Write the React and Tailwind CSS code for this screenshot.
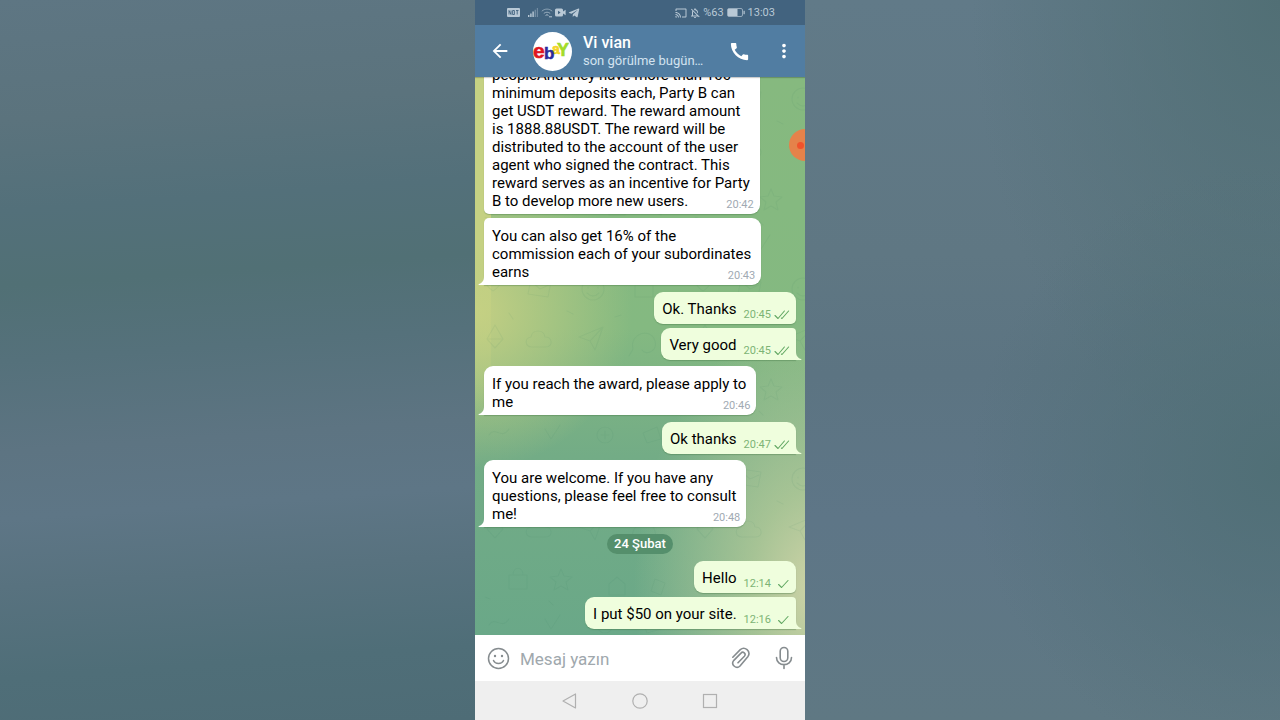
import React from "react";
import { MdArrowBack, MdCall, MdMoreVert, MdCast, MdOutlineNotificationsOff } from "react-icons/md";
import { FaTelegramPlane } from "react-icons/fa";

const messages = [
  {
    time: "20:42",
    last: false,
    lines: [
      "peopleAnd they have more than 100",
      "minimum deposits each, Party B can",
      "get USDT reward. The reward amount",
      "is 1888.88USDT. The reward will be",
      "distributed to the account of the user",
      "agent who signed the contract. This",
      "reward serves as an incentive for Party",
      "B to develop more new users.",
    ],
  },
  {
    time: "20:43",
    last: true,
    joined: true,
    lines: ["You can also get 16% of the", "commission each of your subordinates", "earns"],
  },
  { out: true, time: "20:45", read: true, last: false, lines: ["Ok. Thanks"] },
  { out: true, time: "20:45", read: true, last: true, joined: true, lines: ["Very good"] },
  { time: "20:46", last: true, lines: ["If you reach the award, please apply to", "me"] },
  { out: true, time: "20:47", read: true, last: true, lines: ["Ok thanks"] },
  {
    time: "20:48",
    last: true,
    lines: ["You are welcome. If you have any", "questions, please feel free to consult", "me!"],
  },
  { date: "24 Şubat" },
  { out: true, time: "12:14", last: false, lines: ["Hello"] },
  { out: true, time: "12:16", last: true, joined: true, lines: ["I put $50 on your site."] },
];

function StatusBar() {
  return (
    <div className="flex h-[25px] shrink-0 items-center justify-between bg-[#42637f] pr-[30px] pl-8 text-[#b9c9d6]">
      <div className="flex items-center gap-[2px]">
        <svg width="13" height="9" viewBox="0 0 13 9" className="mr-[6px]" aria-hidden="true">
          <rect width="13" height="9" rx="1" fill="currentColor" />
          <path d="M2 2.5v4M2 2.5l2 4v-4M5.6 2.5h1.8v4H5.6zM9 2.5h2.5M10.2 2.5v4" stroke="#42637f" strokeWidth="0.9" fill="none" />
        </svg>
        <svg width="10" height="9" viewBox="0 0 10 9" fill="currentColor" aria-hidden="true">
          <path d="M0 7h1.4v2H0zM2.2 5.4h1.4V9H2.2zM4.4 3.6h1.4V9H4.4z" />
          <path d="M6.6 1.8H8V9H6.6zM8.8 0H10v9H8.8z" opacity="0.4" />
        </svg>
        <svg width="13" height="10" viewBox="0 0 13 10" fill="none" stroke="currentColor" strokeWidth="1" aria-hidden="true">
          <path d="M1.800 3.200C4.800.4 9.200.4 12.200 3.200" opacity="0.6" />
          <path d="M3.800 5.400c2-1.600 4.400-1.600 6.400 0" opacity="0.7" />
          <path d="M5.600 7.400c.9-.7 1.900-.7 2.800 0" />
          <path d="M9 8.800h3" />
        </svg>
        <svg width="11" height="9" viewBox="0 0 11 9" aria-hidden="true">
          <rect y="0.5" width="8" height="8" rx="1.5" fill="currentColor" />
          <path d="M8 3.600 10.600 1.800v5.400L8 5.400z" fill="currentColor" />
          <path d="M3 2.800v3.400L5.600 4.500z" fill="#42637f" />
        </svg>
        <FaTelegramPlane size={12} aria-hidden="true" />
      </div>
      <div className="flex items-center gap-[2px] text-[11px] leading-none">
        <MdCast size={12} aria-hidden="true" />
        <MdOutlineNotificationsOff size={12} aria-hidden="true" />
        <span>%63</span>
        <svg width="18" height="9" viewBox="0 0 18 9" className="mx-px" aria-hidden="true">
          <rect x="0.5" y="0.5" width="15" height="8" rx="1.5" fill="none" stroke="currentColor" strokeOpacity="0.7" />
          <rect x="1" y="1" width="9.5" height="7" fill="currentColor" />
          <rect x="16.500" y="2.800" width="1.200" height="3.400" fill="currentColor" />
        </svg>
        <span>13:03</span>
      </div>
    </div>
  );
}

function Avatar() {
  return (
    <svg
      width="39"
      height="39"
      viewBox="0 0 39 39"
      className="ml-[22px] shrink-0"
      fontFamily="Liberation Sans, sans-serif"
      fontWeight="700"
      role="img"
      aria-label="ebay"
    >
      <circle cx="19.5" cy="19.5" r="19.5" fill="#fff" />
      <text x="0" y="26" fontSize="21" fill="#e0151f" stroke="#e0151f" strokeWidth="0.6">e</text>
      <text x="19" y="22" fontSize="14" fill="#f5d327" stroke="#f5d327" strokeWidth="0.6">a</text>
      <text x="11" y="27" fontSize="17" fill="#2b2a9c" stroke="#2b2a9c" strokeWidth="0.5">b</text>
      <text x="24" y="24" fontSize="18" fill="#a3dc2b" stroke="#a3dc2b" strokeWidth="0.6">Y</text>
    </svg>
  );
}

function Header() {
  return (
    <header className="relative z-10 flex h-[52px] shrink-0 items-center bg-[#517da2] pr-[10px] pl-[14px] text-white shadow-[0_1px_1px_rgba(0,0,0,0.2)]">
      <button type="button" aria-label="Geri" className="shrink-0">
        <MdArrowBack size={22} />
      </button>
      <Avatar />
      <div className="ml-[11px] min-w-0 flex-1">
        <h1 className="text-base leading-[19px] font-medium">Vi vian</h1>
        <p className="text-[13px] leading-[18px] text-[#d3e3f0]">son görülme bugün…</p>
      </div>
      <button type="button" aria-label="Ara" className="shrink-0">
        <MdCall size={23} />
      </button>
      <button type="button" aria-label="Diğer" className="ml-[22px] shrink-0">
        <MdMoreVert size={22} />
      </button>
    </header>
  );
}

function Doodles() {
  return (
    <svg className="absolute inset-0 h-full w-full" aria-hidden="true">
      <defs>
        <pattern id="doodles" width="210" height="190" patternUnits="userSpaceOnUse">
          <g fill="none" stroke="#2f7350" strokeOpacity="0.07" strokeWidth="1.200" strokeLinecap="round" strokeLinejoin="round">
            <path d="M18 24c-9-6-9-13-4-14 3 0 4 3 4 3s2-4 5-3c5 2 3 9-5 14z" />
            <path d="M56 12l20 3-3 15-20-3zM57 15l8 7 9-4" />
            <circle cx="118" cy="22" r="11" />
            <path d="M113 20v1M123 20v1M112 26c4 4 8 4 12 0" />
            <path d="M160 18h18v12h-18zM164 18c0-8 10-8 10 0" />
            <path d="M12 72l8-14 8 14-8 9zM12 72h16" />
            <path d="M57 80c-7 0-8-9-1-10 1-8 13-8 14 0 8 0 8 10 1 10z" />
            <path d="M104 70l24-10-8 23-5-9zM115 74l13-14" />
            <path d="M158 82c-4-16 18-22 22-8 3 10-9 15-13 9M158 82l-4 7" />
            <path d="M34 118h18v14H34zM38 118c0-9 10-9 10 0" />
            <path d="M86 112l3 7 8 1-6 5 2 8-7-4-7 4 2-8-6-5 8-1z" />
            <path d="M134 138h16v-11l-8-7-8 7z" />
            <path d="M14 168c6-10 12 6 20-6M70 162l6 10 9-14M180 122l10 4-4 12-10-4z" />
            <circle cx="130" cy="168" r="8" />
            <path d="M126 168h8M130 164v8M168 166l14-6 4 12-14 4z" />
            <path d="M92 44l6 3M140 50l6-2M34 46l4 6M196 52l5-4M74 144l4 4M10 140l5 2" />
          </g>
        </pattern>
      </defs>
      <rect width="100%" height="100%" fill="url(#doodles)" />
    </svg>
  );
}

function Checks({ read }) {
  return (
    <svg
      width="17"
      height="10"
      viewBox="0 0 17 10"
      fill="none"
      stroke="#62a863"
      strokeWidth="1.1"
      strokeLinecap="round"
      strokeLinejoin="round"
      role="img"
      aria-label={read ? "Okundu" : "Gönderildi"}
    >
      {read ? <path d="M1 5.500 4 8.500 10.400 1M7.400 8 8 8.500 14.600 1" /> : <path d="M4.600 5.500 7.600 8.500 14 1.500" />}
    </svg>
  );
}

function Bubble({ message }) {
  const { out, time, last, joined, read, lines } = message;
  const text = lines.map((line) => (
    <span key={line} className="block">
      {line}
    </span>
  ));

  if (out) {
    return (
      <div
        className={`relative ml-auto flex w-fit items-end gap-[7px] rounded-[9px] bg-[#effedd] pt-2 pr-[5px] pb-1 pl-2 shadow-[0_1px_1px_rgba(60,110,60,0.35)] ${
          joined ? "mt-1 rounded-tr-[4px]" : "mt-[7px]"
        } ${last ? "rounded-br-none" : "rounded-br-[5px]"}`}
      >
        <p className="pb-[2px]">{text}</p>
        <div className="flex items-center gap-[3px]">
          <time className="text-[11px] leading-[10px] text-[#7db475]">{time}</time>
          <Checks read={read} />
        </div>
        {last && (
          <svg width="6" height="9" viewBox="0 0 6 9" className="absolute bottom-0 left-full" aria-hidden="true">
            <path d="M0 0c0 4 1 6.500 5 8 .6.4.5 1 0 1H0z" fill="#effedd" />
          </svg>
        )}
      </div>
    );
  }

  return (
    <div
      className={`relative w-fit rounded-[9px] bg-white pt-[9px] pr-[10px] pb-1 pl-2 shadow-[0_1px_1px_rgba(60,110,60,0.35)] ${
        joined ? "mt-1 rounded-tl-[5px]" : "mt-[6px]"
      } ${last ? "rounded-bl-none" : "rounded-bl-[5px]"}`}
    >
      <p>{text}</p>
      <time className="absolute right-[6px] bottom-[3px] text-[11px] leading-[12px] text-[#a1aab3]">{time}</time>
      {last && (
        <svg width="6" height="9" viewBox="0 0 6 9" className="absolute right-full bottom-0" aria-hidden="true">
          <path d="M6 0c0 4-1 6.500-5 8-.6.4-.5 1 0 1h5z" fill="#fff" />
        </svg>
      )}
    </div>
  );
}

function Chat() {
  return (
    <main className="relative flex min-h-0 flex-1 flex-col justify-end overflow-hidden bg-[radial-gradient(circle_at_0%_42%,#c4cf83_0%,rgba(196,207,131,0)_34%),radial-gradient(ellipse_at_104%_92%,#d0d4a8_0%,rgba(190,206,155,0.7)_14%,rgba(190,206,155,0)_38%),linear-gradient(180deg,#86b97f_0%,#84b981_45%,#73ac86_68%,#6aa888_100%)] px-[9px] pb-[6px]">
      <div className="absolute inset-y-0 left-0 w-4 bg-linear-to-b from-[#c5d183] from-30% to-transparent to-60%" />
      <Doodles />
      <div className="relative text-[15px] leading-[18px] whitespace-nowrap text-black">
        {messages.map((message) =>
          message.date ? (
            <div
              key={message.date}
              className="mx-auto mt-[7px] w-fit rounded-full bg-[#558f6c] px-[7px] text-[13px] leading-5 font-medium text-white"
            >
              {message.date}
            </div>
          ) : (
            <Bubble key={message.lines[0]} message={message} />
          ),
        )}
      </div>
    </main>
  );
}

function Composer() {
  return (
    <form className="flex h-[46px] shrink-0 items-center bg-white px-3 text-[#868c8f]" onSubmit={(e) => e.preventDefault()}>
      <button type="button" aria-label="Emoji" className="shrink-0">
        <svg width="23" height="23" viewBox="0 0 23 23" fill="none" stroke="currentColor" strokeWidth="1.500" strokeLinecap="round">
          <circle cx="11.500" cy="11.500" r="10" />
          <path d="M6.500 13.500c1.800 4 8.200 4 10 0" />
          <circle cx="8" cy="9" r="1.200" fill="currentColor" stroke="none" />
          <circle cx="15" cy="9" r="1.200" fill="currentColor" stroke="none" />
        </svg>
      </button>
      <input
        type="text"
        aria-label="Mesaj"
        placeholder="Mesaj yazın"
        className="ml-[10px] min-w-0 flex-1 bg-transparent pt-1 text-[17px] text-black outline-none placeholder:text-[#a0a8ad]"
      />
      <button type="button" aria-label="Dosya ekle" className="shrink-0">
        <svg width="20" height="22" viewBox="0 0 20 22" fill="none" stroke="currentColor" strokeWidth="1.600" strokeLinecap="round" strokeLinejoin="round">
          <path d="M1.800 10.200 9.300 2.600a5.200 5.200 0 0 1 7.700 6.800L9 19a4.200 4.200 0 0 1-6.400-5.400L10 6.100a2.300 2.300 0 0 1 3.400 3.100L7 15.800" />
        </svg>
      </button>
      <button type="button" aria-label="Ses kaydet" className="ml-6 shrink-0">
        <svg width="18" height="24" viewBox="0 0 18 24" fill="none" stroke="currentColor" strokeWidth="1.600" strokeLinecap="round">
          <rect x="5.200" y="1.500" width="7.600" height="14" rx="3.800" />
          <path d="M1.500 11.500c0 9.500 15 9.500 15 0M9 18.800v3.700" />
        </svg>
      </button>
    </form>
  );
}

function SystemNav() {
  return (
    <nav className="flex h-[39px] shrink-0 items-center justify-center gap-[54px] bg-[#efefef] text-[#b0b0b0]">
      <button type="button" aria-label="Geri">
        <svg width="16" height="16" viewBox="0 0 16 16" fill="none" stroke="currentColor" strokeWidth="1.200" strokeLinejoin="round">
          <path d="M13.500 1v14L1 8z" />
        </svg>
      </button>
      <button type="button" aria-label="Ana ekran">
        <svg width="16" height="16" viewBox="0 0 16 16" fill="none" stroke="currentColor" strokeWidth="1.200">
          <circle cx="8" cy="8" r="7.200" />
        </svg>
      </button>
      <button type="button" aria-label="Son uygulamalar">
        <svg width="16" height="16" viewBox="0 0 16 16" fill="none" stroke="currentColor" strokeWidth="1.200">
          <rect x="1.500" y="1.500" width="13" height="13" />
        </svg>
      </button>
    </nav>
  );
}

export default function App() {
  return (
    <div className="flex h-screen font-[Roboto,sans-serif]">
      <div className="flex-1 bg-[linear-gradient(176deg,#5e7683_0%,#5b737d_16%,#53707a_28%,#517075_38%,#55717b_48%,#5d7482_60%,#5e7686_69%,#58727f_78%,#4f6e78_90%,#4e6c76_100%)]" />
      <div className="relative flex w-full max-w-[330px] flex-col overflow-hidden">
        <StatusBar />
        <Header />
        <Chat />
        <Composer />
        <SystemNav />
        <div className="absolute top-[129px] -right-4 flex size-8 items-center rounded-full bg-[#e5824a] pl-2">
          <span className="size-[7px] rounded-full bg-[#f0522b]" />
        </div>
      </div>
      <div className="flex-1 bg-[radial-gradient(ellipse_at_100%_65%,#506f76_0%,rgba(80,111,118,0)_46%),radial-gradient(ellipse_at_100%_0%,#516f75_0%,rgba(81,111,117,0)_46%),linear-gradient(180deg,#617a88_0%,#5f7783_35%,#5c7482_52%,#5e7687_72%,#5f7883_100%)]" />
    </div>
  );
}
